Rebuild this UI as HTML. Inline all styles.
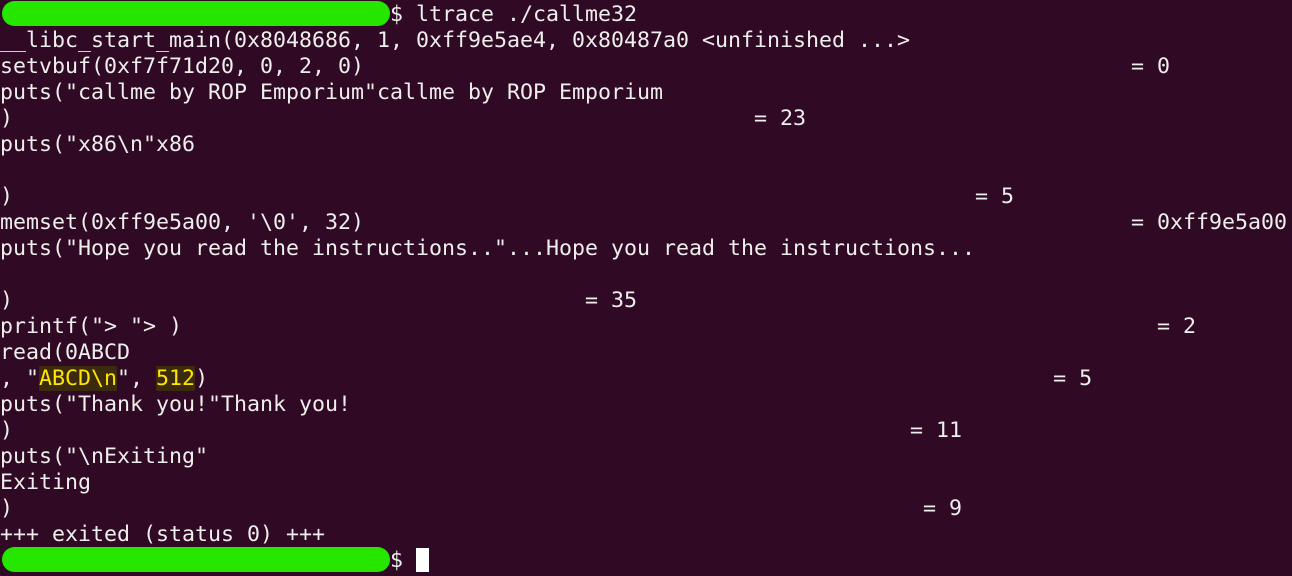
<!DOCTYPE html>
<html><head><style>
html,body{margin:0;padding:0;background:#300a24;width:1292px;height:576px;overflow:hidden}
pre{margin:0;position:absolute;left:0;top:2px;font-family:"DejaVu Sans Mono","Liberation Mono",monospace;font-size:21.6px;line-height:26px;color:#eeeeec}
.y{color:#ffe600;background:#3b2a0c}
.pill{position:absolute;left:2px;width:388px;height:25px;background:#26e600;border-radius:13px}
.cur{display:inline-block;width:13px;height:24px;background:#fff;vertical-align:-5px}
</style></head><body>
<div class="pill" style="top:1px"></div>
<div class="pill" style="top:547px"></div>
<pre>                              $ ltrace ./callme32
__libc_start_main(0x8048686, 1, 0xff9e5ae4, 0x80487a0 &lt;unfinished ...&gt;
setvbuf(0xf7f71d20, 0, 2, 0)                                                           = 0
puts("callme by ROP Emporium"callme by ROP Emporium
)                                                         = 23
puts("x86\n"x86

)                                                                          = 5
memset(0xff9e5a00, '\0', 32)                                                           = 0xff9e5a00
puts("Hope you read the instructions.."...Hope you read the instructions...

)                                            = 35
printf("&gt; "&gt; )                                                                           = 2
read(0ABCD
, "<span class="y">ABCD\n</span>", <span class="y">512</span>)                                                                 = 5
puts("Thank you!"Thank you!
)                                                                     = 11
puts("\nExiting"
Exiting
)                                                                      = 9
+++ exited (status 0) +++
                              $ <span class="cur"></span></pre>
</body></html>
